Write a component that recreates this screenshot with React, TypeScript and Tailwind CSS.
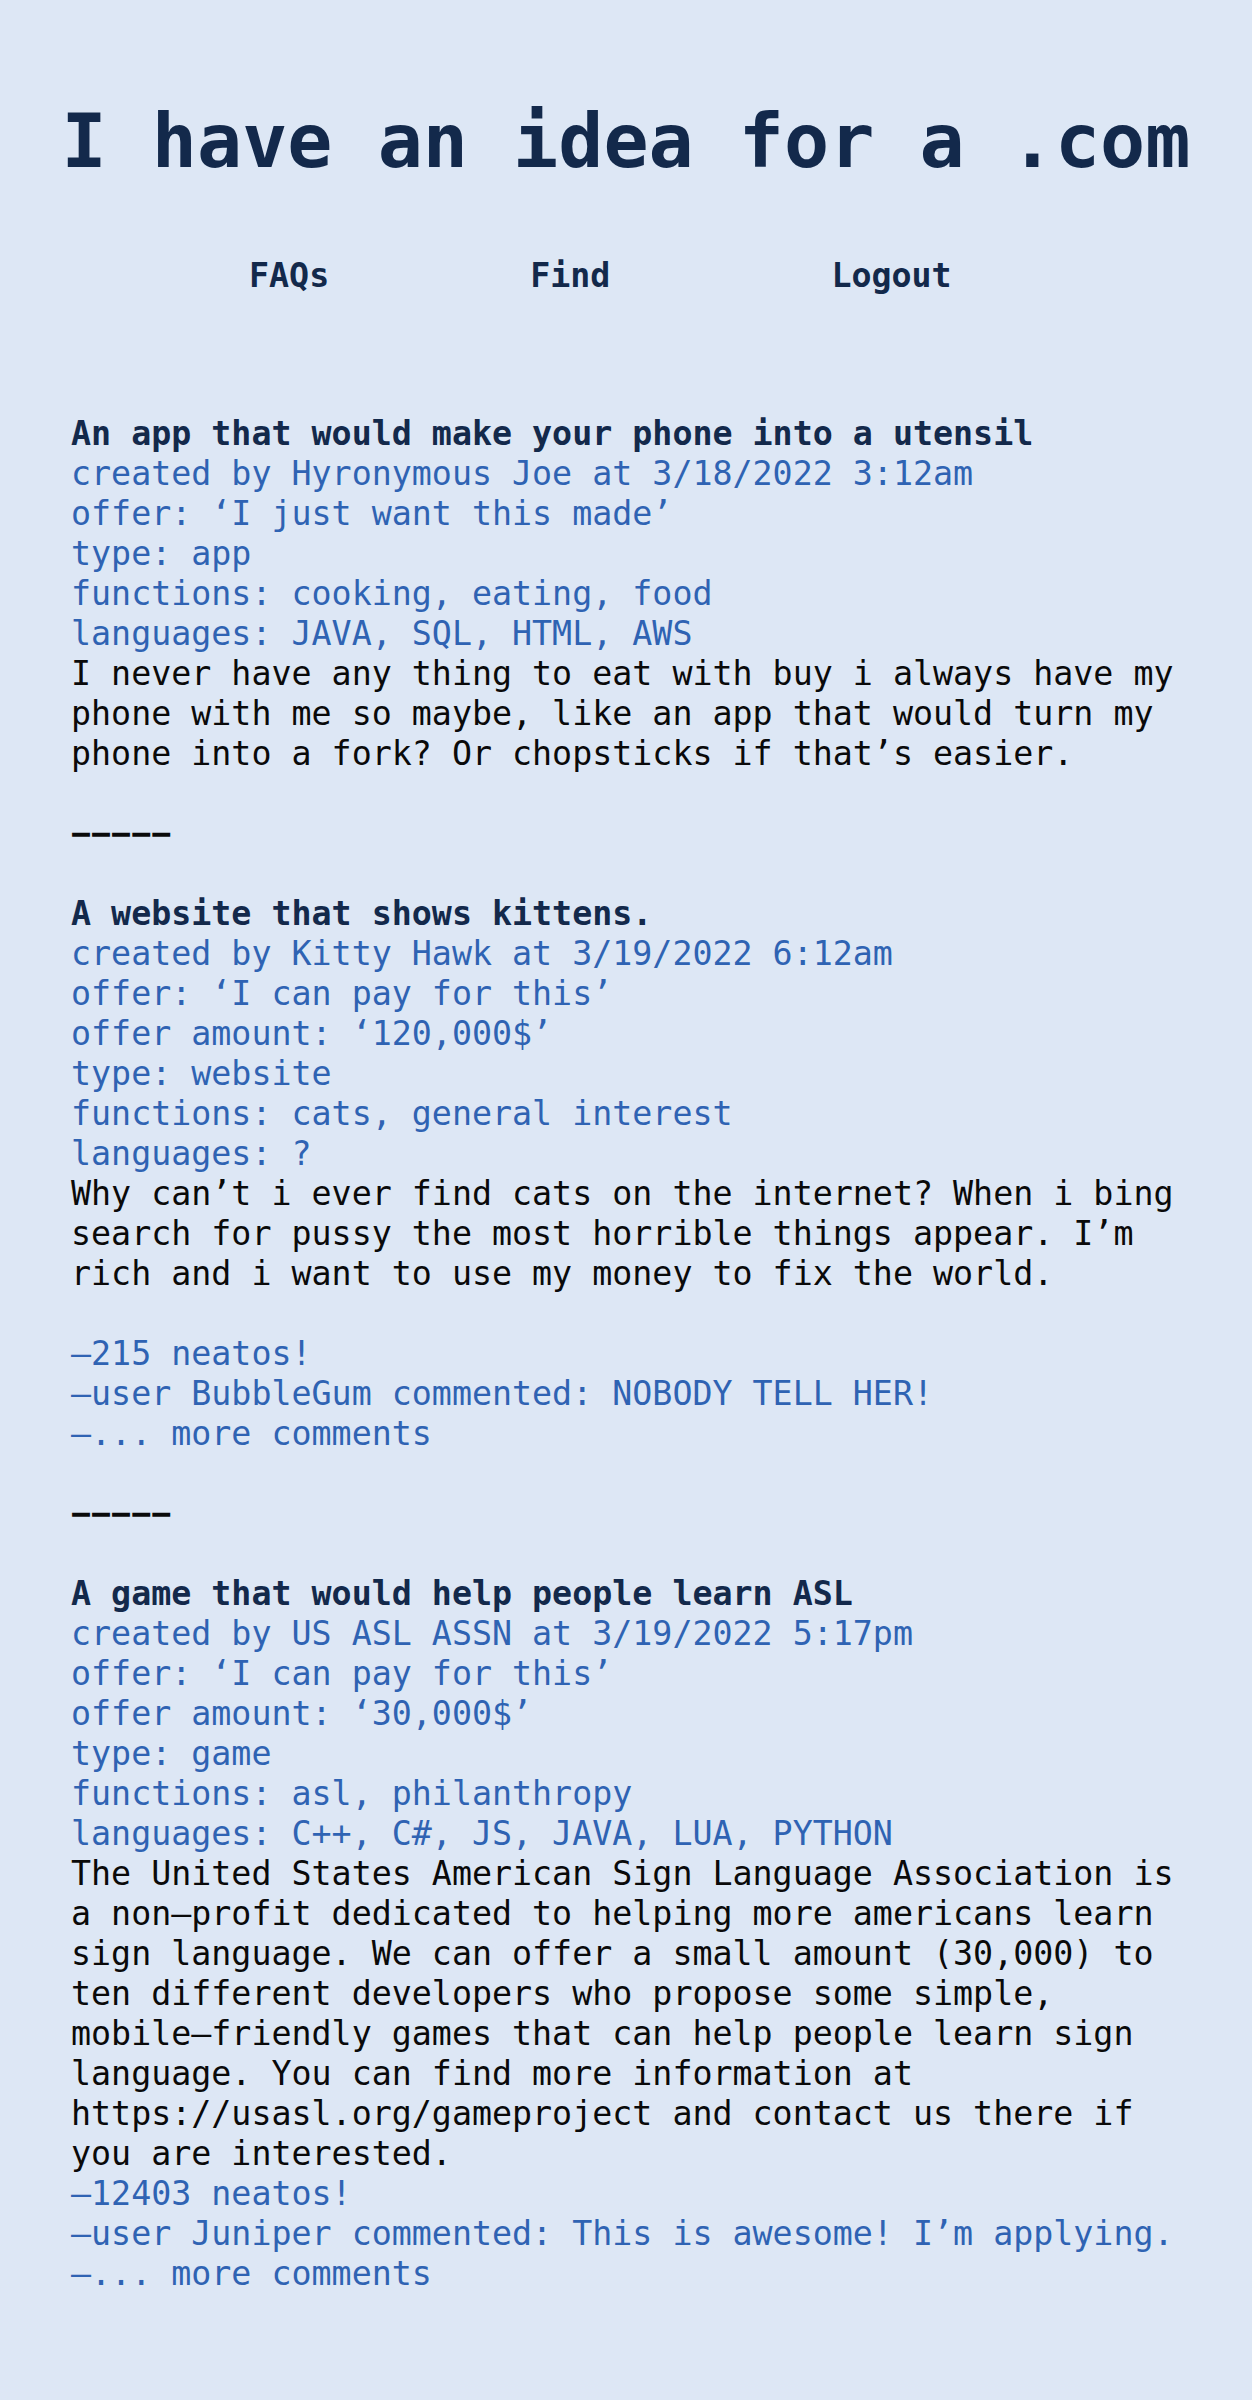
import React from "react";

type Post = {
  title: string;
  meta: string[];
  body: string;
  comments?: string[];
  gapBeforeComments?: boolean;
};

const posts: Post[] = [
  {
    title: "An app that would make your phone into a utensil",
    meta: [
      "created by Hyronymous Joe at 3/18/2022 3:12am",
      "offer: ‘I just want this made’",
      "type: app",
      "functions: cooking, eating, food",
      "languages: JAVA, SQL, HTML, AWS",
    ],
    body: "I never have any thing to eat with buy i always have my phone with me so maybe, like an app that would turn my phone into a fork? Or chopsticks if that’s easier.",
  },
  {
    title: "A website that shows kittens.",
    meta: [
      "created by Kitty Hawk at 3/19/2022 6:12am",
      "offer: ‘I can pay for this’",
      "offer amount: ‘120,000$’",
      "type: website",
      "functions: cats, general interest",
      "languages: ?",
    ],
    body: "Why can’t i ever find cats on the internet? When i bing search for pussy the most horrible things appear. I’m rich and i want to use my money to fix the world.",
    comments: ["–215 neatos!", "–user BubbleGum commented: NOBODY TELL HER!", "–... more comments"],
    gapBeforeComments: true,
  },
  {
    title: "A game that would help people learn ASL",
    meta: [
      "created by US ASL ASSN at 3/19/2022 5:17pm",
      "offer: ‘I can pay for this’",
      "offer amount: ‘30,000$’",
      "type: game",
      "functions: asl, philanthropy",
      "languages: C++, C#, JS, JAVA, LUA, PYTHON",
    ],
    body: "The United States American Sign Language Association is a non–profit dedicated to helping more americans learn sign language. We can offer a small amount (30,000) to ten different developers who propose some simple, mobile–friendly games that can help people learn sign language. You can find more information at https://usasl.org/gameproject and contact us there if you are interested.",
    comments: ["–12403 neatos!", "–user Juniper commented: This is awesome! I’m applying.", "–... more comments"],
  },
];

function PostItem({ post }: { post: Post }) {
  return (
    <article>
      <h2 className="font-bold text-[#13294b]">{post.title}</h2>
      {post.meta.map((m) => (
        <p key={m} className="text-[#2f63b3]">
          {m}
        </p>
      ))}
      <p className="text-[#0a0a0a]">{post.body}</p>
      {post.comments && (
        <div className={post.gapBeforeComments ? "mt-[40px]" : ""}>
          {post.comments.map((c) => (
            <p key={c} className="text-[#2f63b3]">
              {c}
            </p>
          ))}
        </div>
      )}
    </article>
  );
}

export default function App() {
  return (
    <div className="min-h-screen bg-[#dde7f5] pb-[120px] font-['DejaVu_Sans_Mono',monospace] text-[33.3px] leading-[40px]">
      <header className="pt-[96px]">
        <h1 className="text-center text-[75px] font-bold leading-[90px] text-[#13294b]">
          I have an idea for a .com
        </h1>
        <nav className="mt-[70px] flex pl-[249px] font-bold text-[#13294b]">
          <a href="#">FAQs</a>
          <a href="#" className="ml-[201px]">
            Find
          </a>
          <a href="#" className="ml-[221px]">
            Logout
          </a>
        </nav>
      </header>

      <main className="mt-[118px] flex w-[1181px] flex-col gap-[40px] pl-[71px]">
        {posts.map((p, i) => (
          <React.Fragment key={p.title}>
            {i > 0 && <div className="font-bold text-[#0a0a0a]">−−−−−</div>}
            <PostItem post={p} />
          </React.Fragment>
        ))}
      </main>
    </div>
  );
}
